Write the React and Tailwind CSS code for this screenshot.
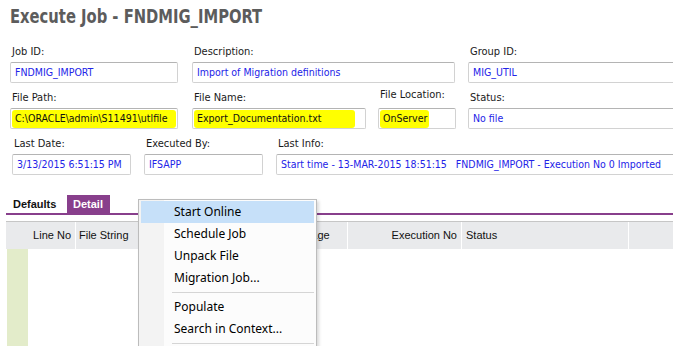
import React from "react";

const LBL = { fontFamily: "'DejaVu Sans Condensed', 'DejaVu Sans', sans-serif" };

function Field({ label, value, w, hl, hlW, lblCls = "", valCls = "" }) {
  return (
    <div className="flex flex-col shrink-0" style={{ width: w }}>
      <div className={"h-[18px] pl-[2px] text-[11px] leading-[16px] text-[#1a1a1a] whitespace-nowrap " + lblCls}>{label}</div>
      <div className="h-[21px] border border-[#d2d2d2] border-t-[#b4b4b4] rounded-[2px] bg-white flex items-center overflow-hidden">
        {hl ? (
          <div className="ml-[1px] h-[18px] bg-[#ffff00] rounded-[3px] flex items-center pl-[3px] text-[10.5px] text-[#111] whitespace-nowrap" style={{ width: hlW }}>
            {value}
          </div>
        ) : (
          <div className={"pl-[4px] text-[10.5px] text-[#2323e8] whitespace-nowrap " + valCls}>{value}</div>
        )}
      </div>
    </div>
  );
}

export default function App() {
  const menuItems1 = ["Start Online", "Schedule Job", "Unpack File", "Migration Job..."];
  const menuItems2 = ["Populate", "Search in Context..."];
  return (
    <div className="relative w-[673px] h-[346px] overflow-hidden bg-white">
      <div className="h-[44px] pl-[10px] pt-[4px]">
        <div
          className="inline-block origin-left scale-x-[0.82] text-[20px] leading-[24px] font-bold text-[#5c5c5c] whitespace-nowrap"
          style={{ fontFamily: "'DejaVu Sans Condensed', 'DejaVu Sans', sans-serif" }}
        >
          Execute Job - FNDMIG_IMPORT
        </div>
      </div>

      <div style={LBL}>
        <div className="flex h-[39px] mb-[7px] pl-[10px]">
          <Field label="Job ID:" value="FNDMIG_IMPORT" w={168} />
          <div className="w-[14px] shrink-0" />
          <Field label="Description:" value="Import of Migration definitions" w={263} />
          <div className="w-[13px] shrink-0" />
          <Field label="Group ID:" value="MIG_UTIL" w={230} />
        </div>
        <div className="flex h-[39px] mb-[7px] pl-[10px]">
          <Field label="File Path:" value={"C:\\ORACLE\\admin\\S11491\\utlfile"} w={168} hl hlW={164} />
          <div className="w-[14px] shrink-0" />
          <Field label="File Name:" value="Export_Documentation.txt" w={174} hl hlW={161} />
          <div className="w-[12px] shrink-0" />
          <Field label="File Location:" value="OnServer" w={78} hl hlW={49} lblCls="-mt-[3px] mb-[3px]" />
          <div className="w-[12px] shrink-0" />
          <Field label="Status:" value="No file" w={230} />
        </div>
        <div className="flex h-[39px] pl-[12px]">
          <Field label="Last Date:" value="3/13/2015 6:51:15 PM" w={119} lblCls="pl-0" />
          <div className="w-[13px] shrink-0" />
          <Field label="Executed By:" value="IFSAPP" w={119} />
          <div className="w-[13px] shrink-0" />
          <Field
            label="Last Info:"
            value={"Start time - 13-MAR-2015 18:51:15\u00a0\u00a0 FNDMIG_IMPORT - Execution No 0 Imported"}
            w={420}
          />
        </div>
      </div>

      {/* tabs */}
      <div className="mt-[18px] ml-[6px]" style={{ fontFamily: "'Liberation Sans', Arial, sans-serif" }}>
        <div className="flex items-end h-[20px]">
          <div className="w-[61px] h-[18px] pl-[7px] text-[11px] font-bold leading-[18px] text-[#111]">Defaults</div>
          <div className="w-[43px] h-[18px] pl-[6px] text-[11px] font-bold leading-[18px] text-white bg-[#883f8c]">Detail</div>
        </div>
        <div className="h-[2px] bg-[#883f8c]" />
        <div className="h-[6px]" />
        <div className="flex h-[28px] border-t border-[#c6c6c6] bg-[#e9eaec] text-[11px] text-[#111] leading-[27px]">
          <div className="w-[69px] text-right pr-[4px] shrink-0">Line No</div>
          <div className="w-[1px] bg-white shrink-0" />
          <div className="w-[204px] pl-[3px] shrink-0">File String</div>
          <div className="w-[1px] bg-white shrink-0" />
          <div className="w-[66px] pl-[4px] shrink-0">Message</div>
          <div className="w-[1px] bg-white shrink-0" />
          <div className="w-[113px] text-right pr-[4px] shrink-0">Execution No</div>
          <div className="w-[1px] bg-white shrink-0" />
          <div className="w-[166px] pl-[4px] shrink-0">Status</div>
          <div className="w-[1px] bg-white shrink-0" />
          <div className="flex-1" />
        </div>
        <div className="flex h-[100px]">
          <div className="w-[21px] ml-[1px] bg-[#e3ecca]" />
        </div>
      </div>

      {/* context menu */}
      <div
        className="absolute left-[138px] top-[199px] w-[179px] h-[160px] border border-[#bcbcbc] bg-[#fcfcfc] shadow-[2px_2px_3px_rgba(0,0,0,0.15)]"
        style={{ fontFamily: "'Noto Sans', 'Open Sans', sans-serif" }}
      >
        <div className="absolute left-0 top-0 bottom-0 w-[25px] bg-[#f3f3f3]" />
        <div className="relative pt-[1px] px-[2px]">
          {menuItems1.map((t, i) => (
            <div
              key={t}
              className={"h-[22px] pl-[33px] text-[12px] leading-[21px] text-black " + (i === 0 ? "bg-[#c6e0f9]" : "")}
            >
              {t}
            </div>
          ))}
          <div className="h-[7px] flex items-center pl-[31px]">
            <div className="h-[1px] w-full bg-[#d5d5d5]" />
          </div>
          {menuItems2.map((t) => (
            <div key={t} className="h-[22px] pl-[33px] text-[12px] leading-[21px] text-black">
              {t}
            </div>
          ))}
          <div className="h-[7px] flex items-center pl-[31px]">
            <div className="h-[1px] w-full bg-[#d5d5d5]" />
          </div>
        </div>
      </div>
    </div>
  );
}
